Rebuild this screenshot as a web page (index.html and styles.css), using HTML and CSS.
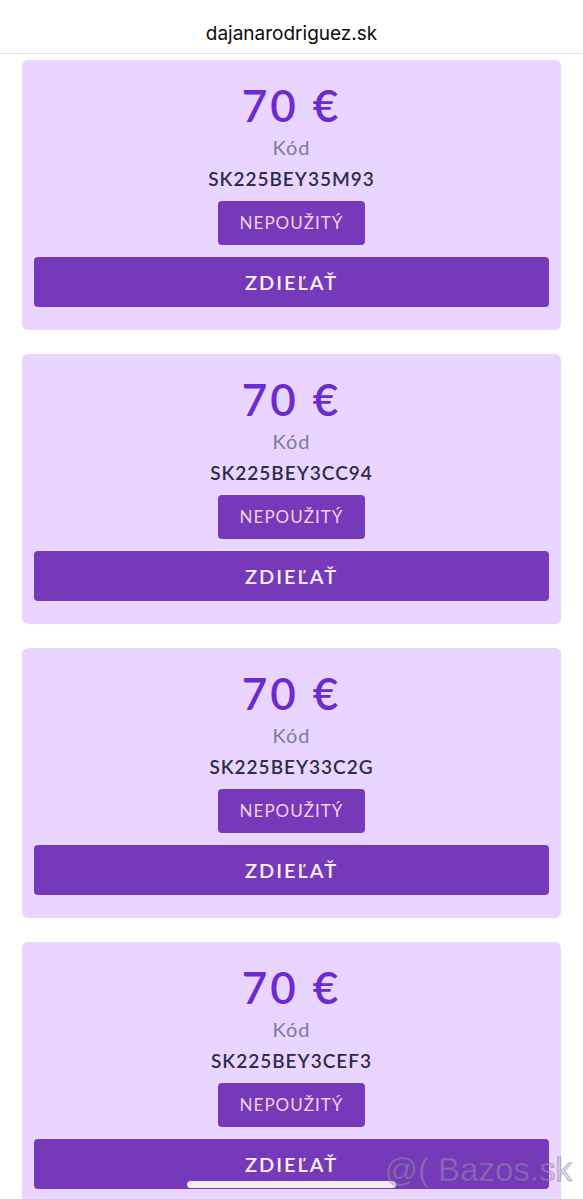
FILE: index.html
```html
<!DOCTYPE html>
<html lang="sk">
<head>
    <meta charset="UTF-8">
    <meta name="viewport" content="width=device-width, initial-scale=1.0">
    <title>dajanarodriguez.sk</title>
    <link rel="stylesheet" href="styles.css">
</head>
<body>
    <header class="address-bar">dajanarodriguez.sk</header>

    <main class="voucher-list">
        <section class="voucher">
            <h2 class="price">70 €</h2>
            <p class="label">Kód</p>
            <p class="code">SK225BEY35M93</p>
            <span class="status">NEPOUŽITÝ</span>
            <button type="button" class="share-button">ZDIEĽAŤ</button>
        </section>

        <section class="voucher">
            <h2 class="price">70 €</h2>
            <p class="label">Kód</p>
            <p class="code">SK225BEY3CC94</p>
            <span class="status">NEPOUŽITÝ</span>
            <button type="button" class="share-button">ZDIEĽAŤ</button>
        </section>

        <section class="voucher">
            <h2 class="price">70 €</h2>
            <p class="label">Kód</p>
            <p class="code">SK225BEY33C2G</p>
            <span class="status">NEPOUŽITÝ</span>
            <button type="button" class="share-button">ZDIEĽAŤ</button>
        </section>

        <section class="voucher">
            <h2 class="price">70 €</h2>
            <p class="label">Kód</p>
            <p class="code">SK225BEY3CEF3</p>
            <span class="status">NEPOUŽITÝ</span>
            <button type="button" class="share-button">ZDIEĽAŤ</button>
        </section>
    </main>

    <div class="home-indicator"></div>
    <div class="watermark">@( Bazos.sk</div>
</body>
</html>
```

FILE: styles.css
```css
* {
    box-sizing: border-box;
}

body {
    display: flex;
    flex-direction: column;
    position: relative;
    height: 100vh;
    margin: 0;
    overflow: hidden;
    background-color: #fff;
    border-bottom: 1px solid #d5d0da;
    font-family: Lato, "Liberation Sans", sans-serif;
}

.address-bar {
    flex: none;
    padding: 20px 0 5px;
    border-bottom: 1px solid #dfe3ea;
    color: #0b0b0b;
    font-family: Inter, "Liberation Sans", sans-serif;
    font-size: 19px;
    line-height: 28px;
    text-align: center;
}

.voucher-list {
    display: flex;
    flex: 1;
    flex-direction: column;
    gap: 24px;
    min-height: 0;
    padding: 6px 22px 0;
    overflow: hidden;
}

.voucher {
    display: flex;
    flex: none;
    flex-direction: column;
    align-items: center;
    padding: 19px 12px 23px;
    border-radius: 6px;
    background-color: #e9d5ff;
}

.price,
.label,
.code {
    margin: 0;
}

.price {
    color: #6b2bd0;
    font-size: 44px;
    font-weight: 600;
    letter-spacing: 3px;
    line-height: 52px;
}

.label {
    color: #7c7ba0;
    font-size: 20px;
    letter-spacing: 1px;
    line-height: 32px;
}

.code {
    margin-bottom: 6px;
    color: #2d2d48;
    font-size: 19px;
    font-weight: 600;
    letter-spacing: 1px;
    line-height: 32px;
}

.status {
    margin-bottom: 12px;
    padding: 0 22px;
    border-radius: 4px;
    background-color: #7539ba;
    color: #fbcfe8;
    font-size: 17px;
    letter-spacing: 1px;
    line-height: 44px;
}

.share-button {
    width: 100%;
    height: 50px;
    padding: 0;
    border: none;
    border-radius: 4px;
    background-color: #7539ba;
    color: #faf0ff;
    font-family: inherit;
    font-size: 20px;
    font-weight: 600;
    letter-spacing: 2px;
    cursor: pointer;
}

.home-indicator {
    position: absolute;
    bottom: 11px;
    left: 50%;
    width: 36%;
    height: 7px;
    border-radius: 4px;
    background-color: #f1edf3;
    transform: translateX(-50%);
}

.watermark {
    position: absolute;
    right: 11px;
    bottom: 9px;
    color: rgba(190, 170, 210, 0.4);
    font-family: "Liberation Sans", sans-serif;
    font-size: 33px;
    line-height: 40px;
    -webkit-text-stroke: 1px rgba(90, 80, 105, 0.4);
}
```
